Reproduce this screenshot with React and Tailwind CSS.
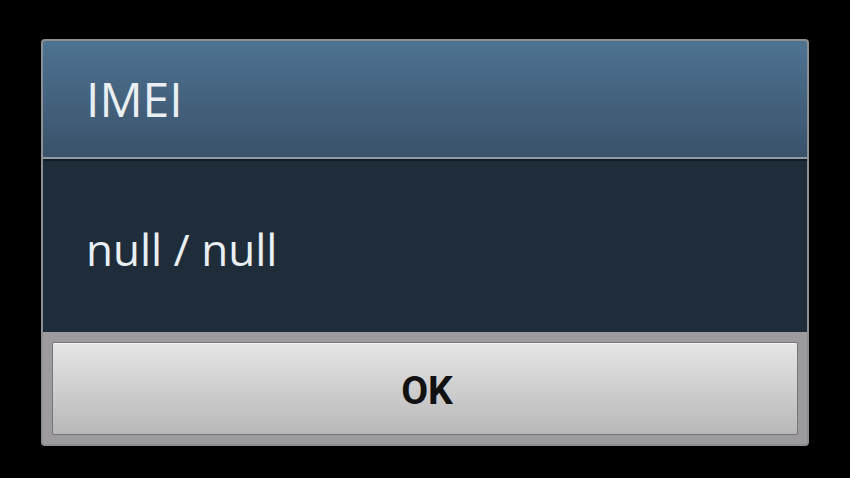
import React from "react";

function App() {
  return (
    <div className="w-[850px] h-[478px] bg-black pt-[39px] pl-[41px]">
      <div className="w-[768px] h-[407px] rounded-[4px] border-2 border-[#8b8f94] bg-[#9d9b9e] overflow-hidden flex flex-col">
        {/* title bar */}
        <div className="h-[116px] shrink-0 bg-gradient-to-b from-[#4e7392] to-[#3a526a] pl-[43px] pt-[33px]">
          <div className="text-[48px] leading-[50px] text-[#eaeff3] font-['Open_Sans',sans-serif]">IMEI</div>
        </div>
        <div className="h-[2px] shrink-0 bg-[#8e9ba6]" />
        <div className="h-[2px] shrink-0 bg-[#121c25]" />
        {/* message */}
        <div className="h-[171px] shrink-0 bg-[#1f2d3b] pl-[43px] pt-[63px]">
          <div className="text-[44px] leading-[50px] text-[#eaeff3] font-['Open_Sans',sans-serif]">null / null</div>
        </div>
        {/* button bar */}
        <div className="flex-1 px-[9px] pt-[10px] pb-[9px] flex">
          <button className="flex-1 flex items-center justify-center pt-[6px] rounded-[2px] border border-[#76767a] bg-gradient-to-b from-[#e6e6e6] to-[#b8b8b8] shadow-[inset_0_1px_0_#f4f4f4]">
            <span className="text-[39px] font-bold text-[#111] font-['Roboto',sans-serif] leading-none ml-[4px]">OK</span>
          </button>
        </div>
      </div>
    </div>
  );
}

export default App;
